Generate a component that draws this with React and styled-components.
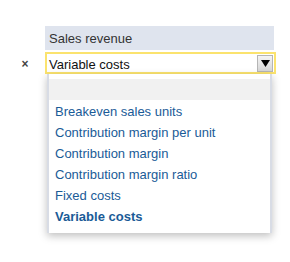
import styled, { createGlobalStyle } from 'styled-components'

const Global = createGlobalStyle`
    body {
        margin: 0;
        background: #ffffff;
        font-family: "Liberation Sans", Arial, sans-serif;
    }
`

const options = [
    'Breakeven sales units',
    'Contribution margin per unit',
    'Contribution margin',
    'Contribution margin ratio',
    'Fixed costs',
    'Variable costs',
]

function App() {
    const selected = 'Variable costs'

    return (
        <Page>
            <Global />
            <Grid>
                <span />
                <Header>Sales revenue</Header>
                <Remove>×</Remove>
                <Select>
                    <Value>{selected}</Value>
                    <ArrowBtn>
                        <svg width="9" height="7" viewBox="0 0 9 7">
                            <path d="M0 0 H9 L4.5 7 Z" fill="#000" />
                        </svg>
                    </ArrowBtn>
                </Select>
                <span />
                <Dropdown>
                    <Search />
                    {options.map((o) => (
                        <Option key={o} active={o === selected}>{o}</Option>
                    ))}
                </Dropdown>
            </Grid>
        </Page>
    )
}

export default App

const Page = styled.div`
    width: 290px;
    height: 262px;
    padding-top: 26px;
    box-sizing: border-box;
`

const Grid = styled.div`
    display: grid;
    grid-template-columns: 45px 229px;
    row-gap: 2px;
`

const Header = styled.div`
    height: 24px;
    box-sizing: border-box;
    padding: 1px 0 0 4px;
    background: #dfe4ee;
    color: #333;
    font-size: 13px;
    line-height: 23px;
`

const Remove = styled.div`
    display: flex;
    align-items: center;
    justify-content: center;
    padding: 2px 0 0 5px;
    font-size: 12px;
    font-weight: bold;
    color: #444;
`

const Select = styled.div`
    height: 22px;
    box-sizing: border-box;
    border: 2px solid #fbe36e;
    display: flex;
    align-items: center;
    justify-content: space-between;
    padding: 0 1px 0 2px;
    width: 231px;
`

const Value = styled.span`
    padding-top: 2px;
    font-size: 13px;
    color: #111;
`

const ArrowBtn = styled.div`
    width: 16px;
    height: 17px;
    box-sizing: border-box;
    border: 1px solid #b5b5b5;
    background: linear-gradient(#f4f4f4, #d6d6d6);
    display: flex;
    align-items: center;
    justify-content: center;
`

const Dropdown = styled.div`
    margin-top: -2px;
    margin-left: 2px;
    width: 225px;
    box-sizing: border-box;
    background: #fff;
    border-left: 2px solid #d8dce5;
    border-right: 2px solid #d8dce5;
    box-shadow: 0 3px 8px rgba(0, 0, 0, 0.25);
    padding: 5px 0 6px;
`

const Search = styled.div`
    height: 21px;
    margin-bottom: 1px;
    background: #f1f1f1;
`

const Option = styled.div`
    font-size: 13px;
    line-height: 21px;
    padding-left: 6px;
    color: #1a5b97;
    font-weight: ${({active}) => active ? 'bold' : 'normal'};
`
